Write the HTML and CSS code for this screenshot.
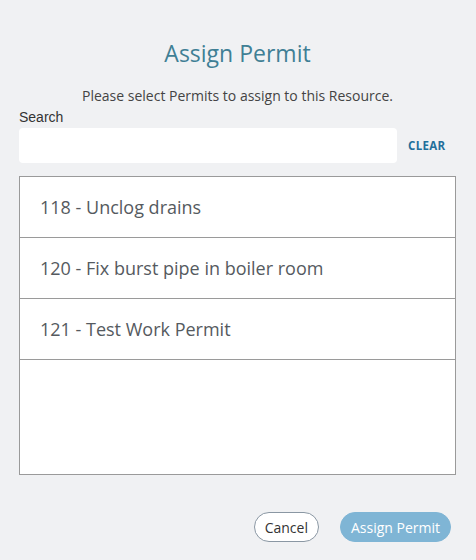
FILE: index.html
```html
<!DOCTYPE html>
<html>
<head>
<meta charset="utf-8">
<link rel="stylesheet" href="styles.css">
</head>
<body>
<div class="dialog">
  <h1 class="title">Assign Permit</h1>
  <p class="subtitle">Please select Permits to assign to this Resource.</p>
  <label class="search-label">Search</label>
  <div class="search-row">
    <input class="search-input" type="text">
    <span class="clear">CLEAR</span>
  </div>
  <div class="list">
    <div class="item">118 - Unclog drains</div>
    <div class="item">120 - Fix burst pipe in boiler room</div>
    <div class="item">121 - Test Work Permit</div>
  </div>
  <div class="actions">
    <button class="btn btn-cancel">Cancel</button>
    <button class="btn btn-primary">Assign Permit</button>
  </div>
</div>
</body>
</html>
```

FILE: styles.css
```css
html, body {
  margin: 0;
  padding: 0;
  background: #f0f1f3;
}
body {
  font-family: "Open Sans", sans-serif;
  width: 476px;
  height: 560px;
  overflow: hidden;
}
.dialog {
  padding: 38px 20px 0 19px;
  display: flex;
  flex-direction: column;
}
.title {
  margin: 0;
  font-size: 23px;
  font-weight: 400;
  line-height: 30px;
  color: #3f7f95;
  text-align: center;
}
.subtitle {
  margin: 19px 0 0 0;
  font-size: 14px;
  line-height: 18px;
  color: #444;
  text-align: center;
}
.search-label {
  font-family: "Liberation Sans", Arial, sans-serif;
  font-size: 14px;
  line-height: 16px;
  color: #333;
  margin-top: 4px;
}
.search-row {
  display: flex;
  align-items: center;
  margin-top: 3px;
}
.search-input {
  width: 378px;
  height: 35px;
  box-sizing: border-box;
  border: none;
  border-radius: 4px;
  background: #fff;
  outline: none;
  margin: 0;
}
.clear {
  margin-left: 11px;
  font-size: 11.5px;
  font-weight: 700;
  color: #236f9b;
  letter-spacing: 0.3px;
}
.list {
  margin-top: 13px;
  height: 299px;
  box-sizing: border-box;
  border: 1px solid #9a9a9a;
  background: #fff;
}
.item {
  height: 61px;
  box-sizing: border-box;
  border-bottom: 1px solid #9a9a9a;
  padding-left: 20px;
  display: flex;
  align-items: center;
  font-size: 18px;
  color: #555a60;
}
.actions {
  display: flex;
  justify-content: flex-end;
  gap: 21px;
  margin-top: 37px;
  padding-right: 5px;
}
.btn {
  font-family: "Open Sans", sans-serif;
  font-size: 14px;
  height: 30px;
  border-radius: 15px;
  padding: 0 10px;
  margin: 0;
  cursor: pointer;
}
.btn-cancel {
  background: #fff;
  border: 1px solid #8a97a3;
  color: #333;
}
.btn-primary {
  background: #7fb5d5;
  border: 1px solid #7fb5d5;
  color: #fff;
}
```
